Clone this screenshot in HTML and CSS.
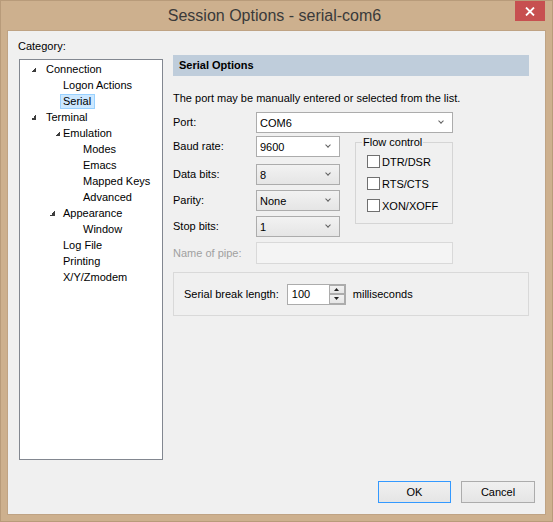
FILE: index.html
```html
<!DOCTYPE html>
<html lang="en">
<head>
    <meta charset="UTF-8">
    <title>Session Options - serial-com6</title>
    <link rel="stylesheet" href="styles.css">
</head>
<body>
    <div class="window">
        <div class="titlebar">
            <span class="title">Session Options - serial-com6</span>
            <span class="close">
                <svg width="10" height="9" viewBox="0 0 10 9"><path d="M1 0.5 L9 8.5 M9 0.5 L1 8.5" stroke="#fff" stroke-width="1.8"/></svg>
            </span>
        </div>

        <div class="client">
            <div class="main">
                <div class="category">
                    <div class="category-label">Category:</div>
                    <ul class="tree">
                        <li class="l0"><span class="twisty"></span>Connection</li>
                        <li class="l1">Logon Actions</li>
                        <li class="l1"><span class="selected">Serial</span></li>
                        <li class="l0"><span class="twisty"></span>Terminal</li>
                        <li class="l1"><span class="twisty near"></span>Emulation</li>
                        <li class="l2">Modes</li>
                        <li class="l2">Emacs</li>
                        <li class="l2">Mapped Keys</li>
                        <li class="l2">Advanced</li>
                        <li class="l1"><span class="twisty mid"></span>Appearance</li>
                        <li class="l2">Window</li>
                        <li class="l1">Log File</li>
                        <li class="l1">Printing</li>
                        <li class="l1">X/Y/Zmodem</li>
                    </ul>
                </div>

                <div class="panel">
                    <div class="panel-header">Serial Options</div>
                    <p class="hint">The port may be manually entered or selected from the list.</p>

                    <div class="form">
                        <label class="field-label">Port:</label>
                        <div class="combo edit wide"><span class="combo-text">COM6</span><span class="chevron"></span></div>

                        <label class="field-label">Baud rate:</label>
                        <div class="combo edit"><span class="combo-text">9600</span><span class="chevron"></span></div>

                        <fieldset class="flow">
                            <legend>Flow control</legend>
                            <div class="check"><span class="box"></span>DTR/DSR</div>
                            <div class="check"><span class="box"></span>RTS/CTS</div>
                            <div class="check"><span class="box"></span>XON/XOFF</div>
                        </fieldset>

                        <label class="field-label">Data bits:</label>
                        <div class="combo list"><span class="combo-text">8</span><span class="chevron"></span></div>

                        <label class="field-label">Parity:</label>
                        <div class="combo list"><span class="combo-text">None</span><span class="chevron"></span></div>

                        <label class="field-label">Stop bits:</label>
                        <div class="combo list"><span class="combo-text">1</span><span class="chevron"></span></div>

                        <label class="field-label disabled">Name of pipe:</label>
                        <div class="pipe-input"></div>
                    </div>

                    <div class="break-box">
                        <span class="break-label">Serial break length:</span>
                        <div class="spin">
                            <span class="spin-value">100</span>
                            <div class="spin-btns">
                                <span class="spin-btn"><svg width="5" height="3" viewBox="0 0 5 3"><path d="M2.5 0 L5 3 L0 3 Z" fill="#222"/></svg></span>
                                <span class="spin-btn"><svg width="5" height="3" viewBox="0 0 5 3"><path d="M0 0 L5 0 L2.5 3 Z" fill="#222"/></svg></span>
                            </div>
                        </div>
                        <span class="unit">milliseconds</span>
                    </div>
                </div>
            </div>

            <div class="buttons">
                <button class="btn default">OK</button>
                <button class="btn cancel">Cancel</button>
            </div>
        </div>
    </div>
</body>
</html>
```

FILE: styles.css
```css
* {
    box-sizing: border-box;
}

body {
    margin: 0;
    width: 553px;
    height: 522px;
    overflow: hidden;
    font-family: "Liberation Sans", Arial, sans-serif;
    font-size: 11px;
    color: #000;
    background-color: #cdb08e;
}

.window {
    height: 522px;
    border: 1px solid #b89b7a;
    display: flex;
    flex-direction: column;
}

.titlebar {
    position: relative;
    height: 29px;
    display: flex;
    align-items: center;
    justify-content: center;
}

.title {
    font-size: 16px;
    color: #3a3a3a;
    padding-top: 1px;
    margin-right: 4px;
}

.close {
    position: absolute;
    top: 0;
    right: 7px;
    width: 30px;
    height: 20px;
    background-color: #c75050;
    display: flex;
    align-items: center;
    justify-content: center;
}

.client {
    flex: 1;
    margin: 0 6px 6px;
    border: 1px solid #bfa384;
    background-color: #f0f0f0;
    display: flex;
    flex-direction: column;
}

.main {
    display: flex;
}

/* left side: category tree */
.category {
    padding: 7px 0 0 10px;
}

.category-label {
    line-height: 16px;
}

.tree {
    list-style: none;
    margin: 5px 0 0 1px;
    padding: 1px 0 0 0;
    width: 144px;
    height: 401px;
    border: 1px solid #828790;
    background-color: #fff;
}

.tree li {
    height: 16px;
    line-height: 16px;
    display: flex;
    align-items: center;
    white-space: nowrap;
}

.tree .l0 { padding-left: 26px; }
.tree .l1 { padding-left: 43px; }
.tree .l2 { padding-left: 63px; }

.twisty {
    width: 5px;
    height: 5px;
    margin-left: -15px;
    margin-right: 10px;
    background: linear-gradient(135deg, transparent 50%, #3c3c3c 50%);
}

.twisty.near {
    margin-left: -8px;
    margin-right: 3px;
}

.twisty.mid {
    margin-left: -13px;
    margin-right: 8px;
}

.selected {
    margin-left: -3px;
    padding: 0 3px 0 2px;
    line-height: 13px;
    border: 1px solid #99d1ff;
    background-color: #cce8ff;
}

/* right side: serial options */
.panel {
    width: 356px;
    margin-left: 10px;
    padding-top: 24px;
}

.panel-header {
    height: 21px;
    line-height: 21px;
    padding-left: 6px;
    font-weight: bold;
    background-color: #bfcddb;
}

.hint {
    margin: 14px 0 0;
    line-height: 16px;
}

.form {
    margin-top: 6px;
    display: grid;
    grid-template-columns: 83px 84px 15px 98px;
    grid-template-rows: 24px 28px 26px 26px 26px 22px;
}

.field-label {
    grid-column: 1;
    height: 21px;
    line-height: 21px;
}

.field-label.disabled {
    color: #a0a0a0;
    height: 22px;
    line-height: 22px;
}

.combo {
    grid-column: 2;
    height: 21px;
    border: 1px solid #acacac;
    display: flex;
    align-items: center;
    padding-left: 3px;
}

.combo.wide {
    grid-column: 2 / 5;
}

.combo.edit {
    background-color: #fff;
}

.combo.list {
    background: linear-gradient(#f2f2f2, #e5e5e5);
}

.combo-text {
    flex: 1;
}

.chevron {
    width: 4px;
    height: 4px;
    margin: 0 9px 3px 0;
    border-right: 1.5px solid #606060;
    border-bottom: 1.5px solid #606060;
    transform: rotate(45deg);
}

.flow {
    grid-column: 4;
    grid-row: 2 / 6;
    margin: 0;
    min-width: 0;
    height: 88px;
    padding: 0 0 0 6px;
    border: 1px solid #d5d5d5;
    display: flex;
    flex-direction: column;
    gap: 9px;
}

.flow legend {
    padding: 0 1px;
    line-height: 13px;
}

.check {
    margin-left: 5px;
    height: 13px;
    display: flex;
    align-items: center;
    gap: 2px;
}

.check:first-of-type {
    margin-top: 6px;
}

.box {
    width: 13px;
    height: 13px;
    border: 1px solid #707070;
    background-color: #fff;
}

.pipe-input {
    grid-column: 2 / 5;
    height: 22px;
    border: 1px solid #d9d9d9;
    background-color: #f4f4f4;
}

.break-box {
    margin-top: 8px;
    height: 44px;
    border: 1px solid #d9d9d9;
    display: flex;
    align-items: center;
    padding-left: 10px;
}

.break-label {
    margin-right: 8px;
}

.spin {
    width: 59px;
    height: 21px;
    border: 1px solid #acacac;
    background-color: #fff;
    display: flex;
}

.spin-value {
    flex: 1;
    line-height: 19px;
    padding-left: 4px;
}

.spin-btns {
    width: 16px;
    display: flex;
    flex-direction: column;
}

.spin-btn {
    flex: 1;
    border: 1px solid #acacac;
    background: linear-gradient(#f2f2f2, #e5e5e5);
    display: flex;
    align-items: center;
    justify-content: center;
}

.unit {
    margin-left: 7px;
}

.buttons {
    margin-top: auto;
    display: flex;
    justify-content: flex-end;
    gap: 10px;
    padding: 0 10px 11px 0;
}

.btn {
    height: 22px;
    font-family: inherit;
    font-size: 11px;
    color: #000;
    border: 1px solid #acacac;
    background: linear-gradient(#f0f0f0, #e5e5e5);
    padding: 0;
}

.btn.default {
    width: 73px;
    border-color: #3399ff;
}

.btn.cancel {
    width: 74px;
}
```
